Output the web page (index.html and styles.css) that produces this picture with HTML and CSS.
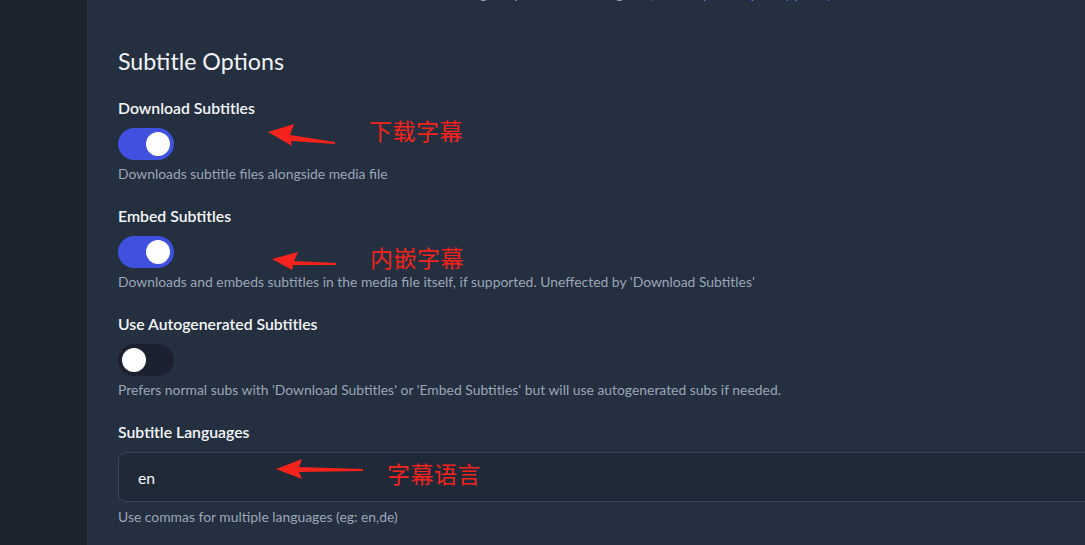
FILE: index.html
```html
<!DOCTYPE html>
<html lang="en">
<head>
    <meta charset="UTF-8">
    <meta name="viewport" content="width=device-width, initial-scale=1.0">
    <title>Settings - Subtitles</title>
    <link rel="stylesheet" href="styles.css">
</head>
<body>
    <div class="layout">
        <aside class="sidebar"></aside>

        <main class="content">
            <p class="desc prev-note">Used as the naming template when saving files, see <a href="#">output template (syntax)</a></p>

            <section class="settings-group">
                <h2>Subtitle Options</h2>

                <div class="field">
                    <label class="field-label">Download Subtitles</label>
                    <span class="toggle on"><span class="knob"></span></span>
                    <p class="desc">Downloads subtitle files alongside media file</p>
                </div>

                <div class="field">
                    <label class="field-label">Embed Subtitles</label>
                    <span class="toggle on"><span class="knob"></span></span>
                    <p class="desc">Downloads and embeds subtitles in the media file itself, if supported. Uneffected by 'Download Subtitles'</p>
                </div>

                <div class="field">
                    <label class="field-label">Use Autogenerated Subtitles</label>
                    <span class="toggle"><span class="knob"></span></span>
                    <p class="desc">Prefers normal subs with 'Download Subtitles' or 'Embed Subtitles' but will use autogenerated subs if needed.</p>
                </div>

                <div class="field">
                    <label class="field-label" for="subLangs">Subtitle Languages</label>
                    <input class="text-input" id="subLangs" type="text" value="en">
                    <p class="desc input-desc">Use commas for multiple languages (eg: en,de)</p>
                </div>
            </section>
        </main>
    </div>

    <!-- red callouts drawn over the form -->
    <svg class="callouts" width="1085" height="545" viewBox="0 0 1085 545">
        <polygon points="268,132 294,124 290,135 335,142 335,144 291,141 292,146" />
        <polygon points="272,259 298,252 294,261 336,263 336,265 293,265 292,270" />
        <polygon points="276,469 302,459 299,467 363,469 363,471 299,472 302,479" />
    </svg>
    <span class="note note-1">下载字幕</span>
    <span class="note note-2">内嵌字幕</span>
    <span class="note note-3">字幕语言</span>
</body>
</html>
```

FILE: styles.css
```css
body {
    margin: 0;
    background-color: #242f3f;
    font-family: "Lato", "Noto Sans", sans-serif;
    overflow: hidden;
}

.layout {
    display: flex;
    height: 545px;
}

.sidebar {
    width: 87px;
    flex-shrink: 0;
    background-color: #1c232c;
    border-right: 1px solid #283140;
}

.content {
    flex: 1;
    padding-left: 30px;
    min-width: 0;
}

.desc {
    margin: 6px 0 0;
    font-size: 13.9px;
    line-height: 16px;
    color: #9ba6b7;
    white-space: nowrap;
}

/* tail of the section above, scrolled mostly out of view */
.content .prev-note {
    margin: -14px 0 0 250px;
}

.prev-note a {
    color: #6b8cff;
    text-decoration: none;
}

.settings-group h2 {
    margin: 43px 0 21px;
    font-size: 23.2px;
    line-height: 32px;
    font-weight: 400;
    color: #f1f3f6;
}

.field {
    display: flex;
    flex-direction: column;
    align-items: flex-start;
    margin-bottom: 24px;
}

.field-label {
    font-size: 15.8px;
    line-height: 20px;
    font-weight: 600;
    color: #f4f6f8;
    margin-bottom: 10px;
}

/* switch */
.toggle {
    width: 56px;
    height: 32px;
    border-radius: 16px;
    background-color: #1b2130;
    display: flex;
    align-items: center;
    padding: 0 4px;
    box-sizing: border-box;
}

.toggle .knob {
    width: 24px;
    height: 24px;
    border-radius: 50%;
    background: #fff;
}

.toggle.on {
    background-color: #3f51de;
    justify-content: flex-end;
}

.text-input {
    width: 1100px;
    height: 50px;
    box-sizing: border-box;
    background-color: #1f2938;
    border: 1px solid #3a4556;
    border-radius: 8px;
    padding: 0 19px;
    font-family: inherit;
    font-size: 15.8px;
    color: #f4f6f8;
    outline: none;
}

.input-desc {
    margin-top: 7px;
}

/* annotations */
.callouts {
    position: absolute;
    left: 0;
    top: 0;
    pointer-events: none;
}

.callouts polygon {
    fill: #f5231b;
}

.note {
    position: absolute;
    font-family: "Noto Sans CJK SC", sans-serif;
    font-size: 23px;
    line-height: 22px;
    color: #f5231b;
    letter-spacing: 0.5px;
}

.note-1 {
    left: 369px;
    top: 119px;
}

.note-2 {
    left: 370px;
    top: 246px;
}

.note-3 {
    left: 387px;
    top: 462px;
}
```
